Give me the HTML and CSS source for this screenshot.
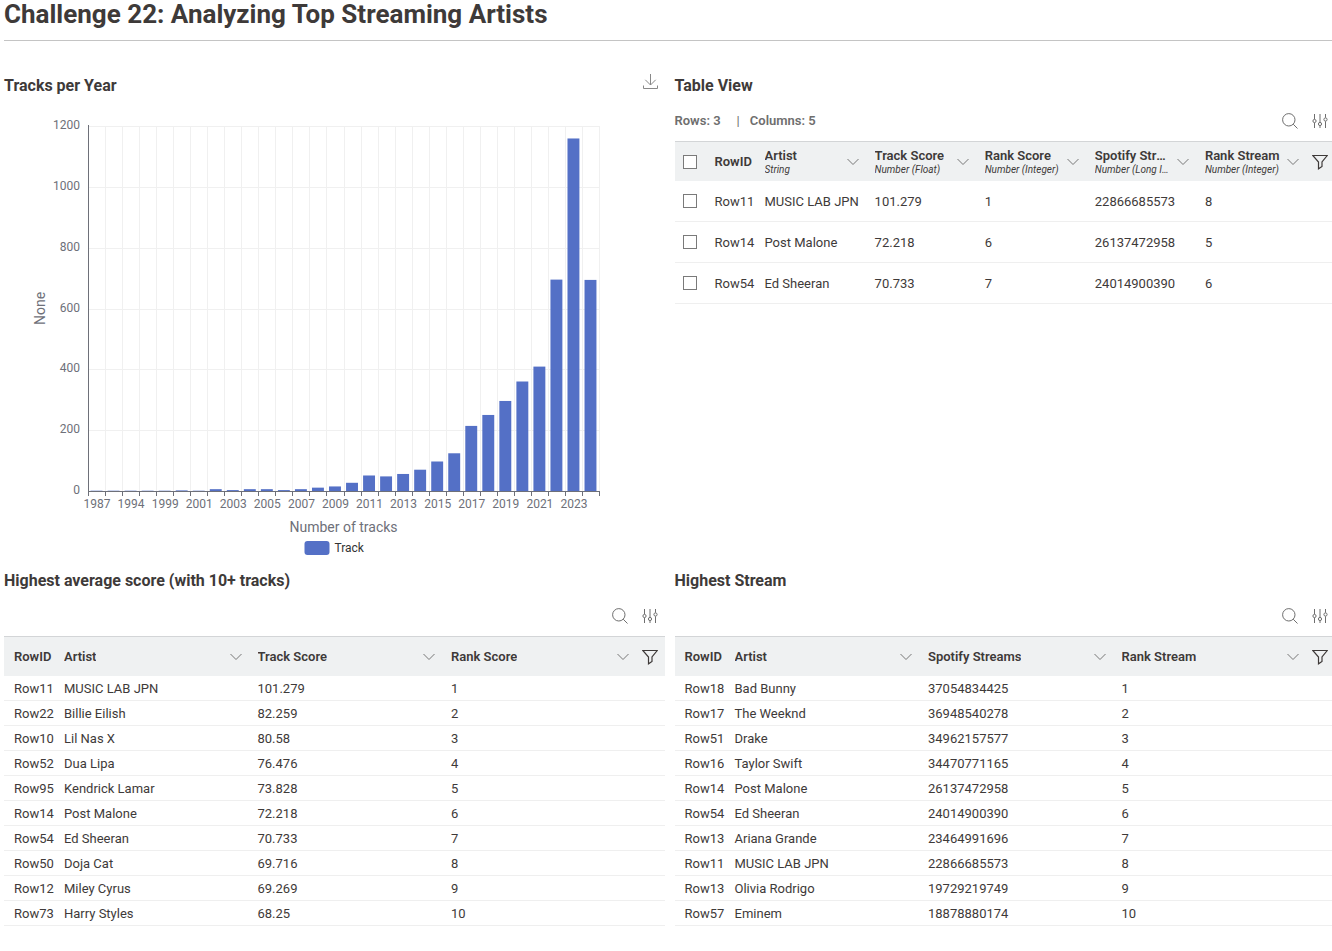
FILE: index.html
```
<!DOCTYPE html>
<html lang="en">
<head>
  <meta charset="UTF-8" />
  <meta name="viewport" content="width=device-width, initial-scale=1.0"/>
  <title>Challenge 22: Analyzing Top Streaming Artists</title>
  <link rel="stylesheet" href="styles.css">
</head>
<body>
  <svg class="sprite" aria-hidden="true">
    <symbol id="chevron" viewBox="0 0 12 8"><path d="M0.5 1 L6 6.5 L11.5 1"/></symbol>
    <symbol id="filter" viewBox="0 0 16 16"><path d="M0.8 1.5 H15.2 L10 8 V12.5 L6.5 14.8 V8 Z"/></symbol>
    <symbol id="search" viewBox="0 0 16 16"><circle cx="6.8" cy="6.8" r="6.2"/><path d="M11.2 11.2 L15.5 15.5"/></symbol>
    <symbol id="sliders" viewBox="0 0 16 16">
      <path d="M2.5 1 V6.2 M2.5 9.8 V15 M8 1 V9.2 M8 12.8 V15 M13.5 1 V4.7 M13.5 8.3 V15"/>
      <circle cx="2.5" cy="8" r="1.6"/><circle cx="8" cy="11" r="1.6"/><circle cx="13.5" cy="6.5" r="1.6"/>
    </symbol>
    <symbol id="download" viewBox="0 0 16 16"><path d="M8.5 0 V11 M3.3 5.8 L8.5 11 L13.7 5.8 M1.5 11.5 V14.5 H15.5 V11.5"/></symbol>
  </svg>

  <main class="page">
    <h1>Challenge 22: Analyzing Top Streaming Artists</h1>

    <div class="grid">
      <section>
        <div class="section-head">
          <h2>Tracks per Year</h2>
          <button type="button" class="icon-btn" aria-label="Download"><svg class="icon light"><use href="#download"/></svg></button>
        </div>
        <div id="chart" class="chart"></div>
      </section>

      <section>
        <div class="section-head"><h2>Table View</h2></div>
        <div class="toolbar">
          <p class="counts"><span>Rows: 3</span><span class="bar">|</span><span>Columns: 5</span></p>
          <button type="button" class="icon-btn" aria-label="Search"><svg class="icon"><use href="#search"/></svg></button>
          <button type="button" class="icon-btn" aria-label="Settings"><svg class="icon"><use href="#sliders"/></svg></button>
        </div>
        <table class="tall">
          <thead>
            <tr>
              <th class="check"><input type="checkbox" aria-label="Select all"></th>
              <th class="rowid">RowID</th>
              <th><div class="head"><div class="name">Artist<small>String</small></div><button type="button" aria-label="Artist options"><svg class="chevron"><use href="#chevron"/></svg></button></div></th>
              <th><div class="head"><div class="name">Track Score<small>Number (Float)</small></div><button type="button" aria-label="Track Score options"><svg class="chevron"><use href="#chevron"/></svg></button></div></th>
              <th><div class="head"><div class="name">Rank Score<small>Number (Integer)</small></div><button type="button" aria-label="Rank Score options"><svg class="chevron"><use href="#chevron"/></svg></button></div></th>
              <th><div class="head"><div class="name">Spotify Streams<small>Number (Long Integer)</small></div><button type="button" aria-label="Spotify Streams options"><svg class="chevron"><use href="#chevron"/></svg></button></div></th>
              <th><div class="head"><div class="name">Rank Stream<small>Number (Integer)</small></div><button type="button" aria-label="Rank Stream options"><svg class="chevron"><use href="#chevron"/></svg></button></div></th>
              <th class="tools"><button type="button" class="icon-btn" aria-label="Filter"><svg class="icon dark"><use href="#filter"/></svg></button></th>
            </tr>
          </thead>
          <tbody>
            <tr><td class="check"><input type="checkbox" aria-label="Select Row11"></td><td>Row11</td><td>MUSIC LAB JPN</td><td>101.279</td><td>1</td><td>22866685573</td><td>8</td><td></td></tr>
            <tr><td class="check"><input type="checkbox" aria-label="Select Row14"></td><td>Row14</td><td>Post Malone</td><td>72.218</td><td>6</td><td>26137472958</td><td>5</td><td></td></tr>
            <tr><td class="check"><input type="checkbox" aria-label="Select Row54"></td><td>Row54</td><td>Ed Sheeran</td><td>70.733</td><td>7</td><td>24014900390</td><td>6</td><td></td></tr>
          </tbody>
        </table>
      </section>

      <section>
        <div class="section-head"><h2>Highest average score (with 10+ tracks)</h2></div>
        <div class="toolbar">
          <button type="button" class="icon-btn" aria-label="Search"><svg class="icon"><use href="#search"/></svg></button>
          <button type="button" class="icon-btn" aria-label="Settings"><svg class="icon"><use href="#sliders"/></svg></button>
        </div>
        <table>
          <thead>
            <tr>
              <th class="rowid">RowID</th>
              <th><div class="head"><div class="name">Artist</div><button type="button" aria-label="Artist options"><svg class="chevron"><use href="#chevron"/></svg></button></div></th>
              <th><div class="head"><div class="name">Track Score</div><button type="button" aria-label="Track Score options"><svg class="chevron"><use href="#chevron"/></svg></button></div></th>
              <th><div class="head"><div class="name">Rank Score</div><button type="button" aria-label="Rank Score options"><svg class="chevron"><use href="#chevron"/></svg></button></div></th>
              <th class="tools"><button type="button" class="icon-btn" aria-label="Filter"><svg class="icon dark"><use href="#filter"/></svg></button></th>
            </tr>
          </thead>
          <tbody>
            <tr><td>Row11</td><td>MUSIC LAB JPN</td><td>101.279</td><td>1</td><td></td></tr>
            <tr><td>Row22</td><td>Billie Eilish</td><td>82.259</td><td>2</td><td></td></tr>
            <tr><td>Row10</td><td>Lil Nas X</td><td>80.58</td><td>3</td><td></td></tr>
            <tr><td>Row52</td><td>Dua Lipa</td><td>76.476</td><td>4</td><td></td></tr>
            <tr><td>Row95</td><td>Kendrick Lamar</td><td>73.828</td><td>5</td><td></td></tr>
            <tr><td>Row14</td><td>Post Malone</td><td>72.218</td><td>6</td><td></td></tr>
            <tr><td>Row54</td><td>Ed Sheeran</td><td>70.733</td><td>7</td><td></td></tr>
            <tr><td>Row50</td><td>Doja Cat</td><td>69.716</td><td>8</td><td></td></tr>
            <tr><td>Row12</td><td>Miley Cyrus</td><td>69.269</td><td>9</td><td></td></tr>
            <tr><td>Row73</td><td>Harry Styles</td><td>68.25</td><td>10</td><td></td></tr>
          </tbody>
        </table>
      </section>

      <section>
        <div class="section-head"><h2>Highest Stream</h2></div>
        <div class="toolbar">
          <button type="button" class="icon-btn" aria-label="Search"><svg class="icon"><use href="#search"/></svg></button>
          <button type="button" class="icon-btn" aria-label="Settings"><svg class="icon"><use href="#sliders"/></svg></button>
        </div>
        <table>
          <thead>
            <tr>
              <th class="rowid">RowID</th>
              <th><div class="head"><div class="name">Artist</div><button type="button" aria-label="Artist options"><svg class="chevron"><use href="#chevron"/></svg></button></div></th>
              <th><div class="head"><div class="name">Spotify Streams</div><button type="button" aria-label="Spotify Streams options"><svg class="chevron"><use href="#chevron"/></svg></button></div></th>
              <th><div class="head"><div class="name">Rank Stream</div><button type="button" aria-label="Rank Stream options"><svg class="chevron"><use href="#chevron"/></svg></button></div></th>
              <th class="tools"><button type="button" class="icon-btn" aria-label="Filter"><svg class="icon dark"><use href="#filter"/></svg></button></th>
            </tr>
          </thead>
          <tbody>
            <tr><td>Row18</td><td>Bad Bunny</td><td>37054834425</td><td>1</td><td></td></tr>
            <tr><td>Row17</td><td>The Weeknd</td><td>36948540278</td><td>2</td><td></td></tr>
            <tr><td>Row51</td><td>Drake</td><td>34962157577</td><td>3</td><td></td></tr>
            <tr><td>Row16</td><td>Taylor Swift</td><td>34470771165</td><td>4</td><td></td></tr>
            <tr><td>Row14</td><td>Post Malone</td><td>26137472958</td><td>5</td><td></td></tr>
            <tr><td>Row54</td><td>Ed Sheeran</td><td>24014900390</td><td>6</td><td></td></tr>
            <tr><td>Row13</td><td>Ariana Grande</td><td>23464991696</td><td>7</td><td></td></tr>
            <tr><td>Row11</td><td>MUSIC LAB JPN</td><td>22866685573</td><td>8</td><td></td></tr>
            <tr><td>Row13</td><td>Olivia Rodrigo</td><td>19729219749</td><td>9</td><td></td></tr>
            <tr><td>Row57</td><td>Eminem</td><td>18878880174</td><td>10</td><td></td></tr>
          </tbody>
        </table>
      </section>
    </div>
  </main>

  <script src="chart.js"></script>
</body>
</html>
```

FILE: styles.css
```
* {
  box-sizing: border-box;
}

html {
  overflow-x: hidden;
}

body {
  margin: 0;
  background: #fff;
  color: #3e3a39;
  font-family: Roboto, "Liberation Sans", sans-serif;
  font-size: 13px;
}

.sprite {
  display: none;
}

/* the page runs slightly past the right edge of the window */
.page {
  margin-left: 4px;
  margin-right: -3px;
}

h1 {
  margin: 0;
  height: 41px;
  border-bottom: 1px solid #c4c4c4;
  font-size: 26px;
  font-weight: 700;
  line-height: 28px;
}

h2 {
  margin: 0;
  font-size: 16px;
  font-weight: 700;
}

.grid {
  display: grid;
  grid-template-columns: 1fr 1fr;
  column-gap: 10px;
  padding-top: 29px;
}

.section-head {
  display: flex;
  justify-content: space-between;
  align-items: center;
  height: 31px;
}

.toolbar {
  display: flex;
  justify-content: flex-end;
  align-items: center;
  height: 40px;
}

.counts {
  display: flex;
  gap: 16px;
  margin: 0 auto 0 0;
  color: #6e6e6e;
  font-weight: 600;
  line-height: 16px;
}

.counts .bar {
  font-weight: 400;
  margin-right: -6px;
}

button {
  display: flex;
  align-items: center;
  justify-content: center;
  padding: 0;
  border: 0;
  background: none;
  cursor: pointer;
}

.icon-btn {
  width: 30px;
  height: 30px;
}

.section-head .icon-btn {
  align-self: flex-start;
  height: 24px;
}

.icon {
  width: 16px;
  height: 16px;
  fill: none;
  stroke: #6e6e6e;
}

.icon.light {
  stroke: #888;
}

.icon.dark {
  stroke: #3e3a39;
  stroke-width: 1.2;
}

.chevron {
  width: 12px;
  height: 8px;
  fill: none;
  stroke: #777;
}

table {
  width: 100%;
  table-layout: fixed;
  border-collapse: separate;
  border-spacing: 0;
}

th,
td {
  padding: 0 0 0 10px;
  text-align: left;
  white-space: nowrap;
}

th {
  height: 40px;
  border-top: 1px solid #d3d5d7;
  background: #eff1f2;
  font-weight: 600;
}

td {
  height: 25px;
  border-bottom: 1px solid #efefef;
}

.tall td {
  height: 41px;
}

.rowid {
  width: 50px;
}

.check,
.tools {
  width: 30px;
}

th.check,
td.check,
th.tools {
  padding: 0;
}

.check input {
  appearance: none;
  display: block;
  width: 14px;
  height: 14px;
  margin: 0 auto;
  border: 1px solid #7a7a7a;
  background: #fff;
}

.head {
  display: flex;
  align-items: center;
  justify-content: space-between;
  gap: 6px;
  padding-right: 6px;
}

.name {
  overflow: hidden;
  text-overflow: ellipsis;
}

.tall .name {
  line-height: 16px;
}

.head button {
  flex: none;
  width: 12px;
}

small {
  display: block;
  overflow: hidden;
  text-overflow: ellipsis;
  font-size: 10px;
  font-style: italic;
  font-weight: 400;
  line-height: 12px;
}

.chart {
  height: 464px;
}

.chart svg {
  display: block;
  width: 100%;
  height: 100%;
}

.chart text {
  fill: #6e7079;
  font-size: 12px;
}

.chart .title {
  font-size: 14px;
}

.chart .legend {
  fill: #333;
}

.chart .split {
  stroke: #f0f0f0;
}

.chart .axis {
  stroke: #6e7079;
}

.chart .col {
  fill: #5470c6;
}
```

FILE: chart.js
```
const years = [1987, 1992, 1994, 1998, 1999, 2000];
for (let y = 2001; y <= 2024; y++) years.push(y);

const tracks = [1, 1, 1, 1, 1, 2, 1, 6, 3, 6, 6, 3, 6, 11, 15, 27, 51, 48, 56,
  70, 97, 124, 214, 250, 296, 360, 409, 695, 1159, 694];

const chart = document.getElementById('chart');

function line(cls, x1, y1, x2, y2) {
  return `<line class="${cls}" x1="${x1}" y1="${y1}" x2="${x2}" y2="${y2}"/>`;
}

function draw() {
  const left = 84, top = 25, bottom = 390, max = 1200;
  const right = Math.round(chart.clientWidth * 0.9);
  const band = (right - left) / years.length;
  const mid = (left + right) / 2;
  const px = n => Math.round(n) + 0.5;
  let out = '';

  for (let v = 0; v <= max; v += 200) {
    const y = bottom - v / max * (bottom - top);
    if (v) out += line('split', left, px(y), right, px(y));
    out += `<text x="${left - 8}" y="${Math.round(y) + 3}" text-anchor="end">${v}</text>`;
  }

  for (let i = 0; i <= years.length; i++) {
    const x = px(left + i * band);
    if (i) out += line('split', x, top, x, bottom);
    out += line('axis', x, bottom, x, bottom + 5);
  }

  years.forEach((year, i) => {
    const x = left + i * band;
    const h = tracks[i] / max * (bottom - top);
    out += `<rect class="col" x="${x + band * 0.15}" y="${bottom - h}" width="${band * 0.7}" height="${h}"/>`;
    if (i % 2 === 0) {
      out += `<text x="${x + band / 2 + 0.5}" y="${bottom + 17}" text-anchor="middle">${year}</text>`;
    }
  });

  out += line('axis', left + 0.5, top - 1, left + 0.5, bottom);
  out += line('axis', left, bottom + 0.5, right + 1, bottom + 0.5);
  out += `<text class="title" text-anchor="middle" transform="translate(41 ${(top + bottom) / 2}) rotate(-90)">None</text>`;
  out += `<text class="title" x="${mid}" y="431" text-anchor="middle">Number of tracks</text>`;
  out += `<rect class="col" x="${mid - 39}" y="440" width="25" height="14" rx="3"/>`;
  out += `<text class="legend" x="${mid - 9}" y="451">Track</text>`;

  chart.innerHTML = `<svg>${out}</svg>`;
}

draw();
window.addEventListener('resize', draw);
```
